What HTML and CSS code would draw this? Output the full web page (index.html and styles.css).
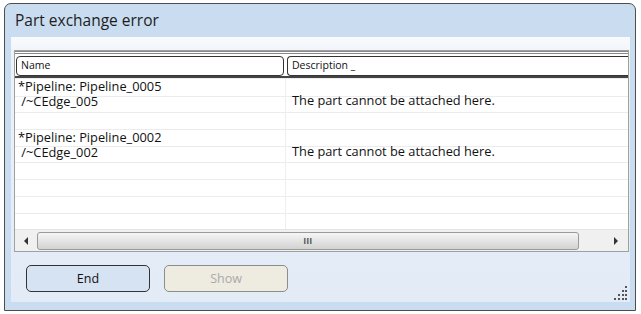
FILE: index.html
```html
<!DOCTYPE html>
<html lang="en">
<head>
    <meta charset="UTF-8">
    <title>Part exchange error</title>
    <link rel="stylesheet" href="styles.css">
</head>
<body>
    <div class="window">
        <div class="title-bar">Part exchange error</div>
        <div class="window-body">
            <div class="panel">
                <div class="grid">
                    <div class="grid-header">
                        <div class="header-cell name-col">Name</div>
                        <div class="header-cell desc-col">Description <span class="sort-mark">_</span></div>
                    </div>
                    <div class="grid-rows">
                        <div class="entry">
                            <div class="name-col">*Pipeline: Pipeline_0005<br>&nbsp;/~CEdge_005</div>
                            <div class="desc-col">The part cannot be attached here.</div>
                        </div>
                        <div class="entry">
                            <div class="name-col">*Pipeline: Pipeline_0002<br>&nbsp;/~CEdge_002</div>
                            <div class="desc-col">The part cannot be attached here.</div>
                        </div>
                    </div>
                    <div class="hscroll">
                        <span class="arrow left"></span>
                        <div class="thumb"><span class="grip">III</span></div>
                        <span class="arrow right"></span>
                    </div>
                </div>
                <div class="buttons">
                    <button class="btn">End</button>
                    <button class="btn disabled" disabled>Show</button>
                </div>
                <svg class="resize-grip" width="14" height="14" viewBox="0 0 14 14">
                    <!-- dotted grip in the corner -->
                    <g fill="#555">
                        <rect x="11" y="0" width="2" height="2"/>
                        <rect x="8" y="4" width="2" height="2"/>
                        <rect x="11" y="4" width="2" height="2"/>
                        <rect x="4" y="8" width="2" height="2"/>
                        <rect x="8" y="8" width="2" height="2"/>
                        <rect x="11" y="8" width="2" height="2"/>
                        <rect x="0" y="12" width="2" height="2"/>
                        <rect x="4" y="12" width="2" height="2"/>
                        <rect x="8" y="12" width="2" height="2"/>
                        <rect x="11" y="12" width="2" height="2"/>
                    </g>
                </svg>
            </div>
        </div>
    </div>
</body>
</html>
```

FILE: styles.css
```css
body {
    margin: 0;
    background-color: #fff;
    font-family: 'Open Sans', 'Noto Sans', sans-serif;
    color: #111;
}
.window {
    margin: 3px 0 0 4px;
    width: 630px;
    height: 306px;
    border: 1px solid #4d4d4d;
    border-radius: 7px 7px 0 0;
    background-color: #c9dcf0;
    display: flex;
    flex-direction: column;
    overflow: hidden;
}
.title-bar {
    height: 33px;
    padding-left: 10px;
    font-size: 15.5px;
    line-height: 32px;
    color: #1e1e1e;
}
.window-body {
    flex: 1;
    min-height: 0;
    padding: 0 5px 8px 6px;
    display: flex;
}
.panel {
    flex: 1;
    min-width: 0;
    position: relative;
    padding: 13px 1px 0 3px;
    background: linear-gradient(#f8fafd, #eef3f9 8%, #e6eef8 60%, #e2ebf6);
    display: flex;
    flex-direction: column;
    overflow: hidden;
}
.grid {
    height: 200px;
    border: 1px solid #a0a0a0;
    background-color: #fff;
    display: flex;
    flex-direction: column;
    overflow: hidden;
}
.grid-header {
    display: flex;
    height: 20px;
    padding: 2px 0 0 1px;
    border-top: 3px double #8a8a8a;
    border-bottom: 2px solid #444;
    font-size: 10.5px;
}
.header-cell {
    border: 1px solid #333;
    border-radius: 4px;
    padding-left: 4px;
    line-height: 17px;
    background-color: #fff;
}
.header-cell.name-col {
    width: 262px;
    flex-shrink: 0;
    margin-right: 3px;
}
.header-cell.desc-col {
    width: 400px;
    flex-shrink: 0;
    border-right: none;
}
.sort-mark {
    font-size: 10px;
}
.grid-rows {
    flex: 1;
    padding-top: 1px;
    font-size: 12.8px;
    background-image:
        linear-gradient(90deg, transparent 270px, #eeeeee 270px, #eeeeee 271px, transparent 271px),
        repeating-linear-gradient(transparent 0, transparent 15.7px, #ececec 15.7px, #ececec 16.7px);
    background-position: 0 0, 0 2px;
}
.entry {
    display: flex;
    align-items: flex-start;
    height: 51px;
}
.entry .name-col {
    width: 274px;
    flex-shrink: 0;
    padding-left: 3px;
    line-height: 14.5px;
    white-space: nowrap;
}
.entry .desc-col {
    padding-top: 14px;
    line-height: 15px;
    white-space: nowrap;
}
.hscroll {
    height: 21px;
    background-color: #f0f0f0;
    border-top: 1px solid #e4e4e4;
    display: flex;
    align-items: center;
}
.arrow {
    width: 0;
    height: 0;
    border-top: 4px solid transparent;
    border-bottom: 4px solid transparent;
}
.arrow.left {
    margin: 0 9px 0 9px;
    border-right: 4px solid #333;
}
.arrow.right {
    margin-left: 35px;
    border-left: 4px solid #333;
}
.thumb {
    width: 540px;
    height: 16px;
    border: 1px solid #9a9a9a;
    border-radius: 3px;
    background: linear-gradient(#f6f6f6, #e4e4e4 50%, #d2d2d2);
    display: flex;
    justify-content: center;
    align-items: center;
}
.grip {
    font-family: 'Liberation Sans', sans-serif;
    font-size: 9px;
    letter-spacing: 0.5px;
    color: #555;
    font-weight: bold;
}
.buttons {
    display: flex;
    gap: 14px;
    padding: 13px 0 0 12px;
}
.btn {
    width: 124px;
    height: 27px;
    margin: 0;
    border: 1px solid #333;
    border-radius: 5px;
    background-color: #d6e3f2;
    font-family: 'Open Sans', 'Noto Sans', sans-serif;
    font-size: 12.5px;
    color: #111;
    padding: 0;
}
.btn.disabled {
    border-color: #8c8c8c;
    background-color: #eeebe1;
    color: #aaa;
}
.resize-grip {
    position: absolute;
    right: 2px;
    bottom: 2px;
}
```
